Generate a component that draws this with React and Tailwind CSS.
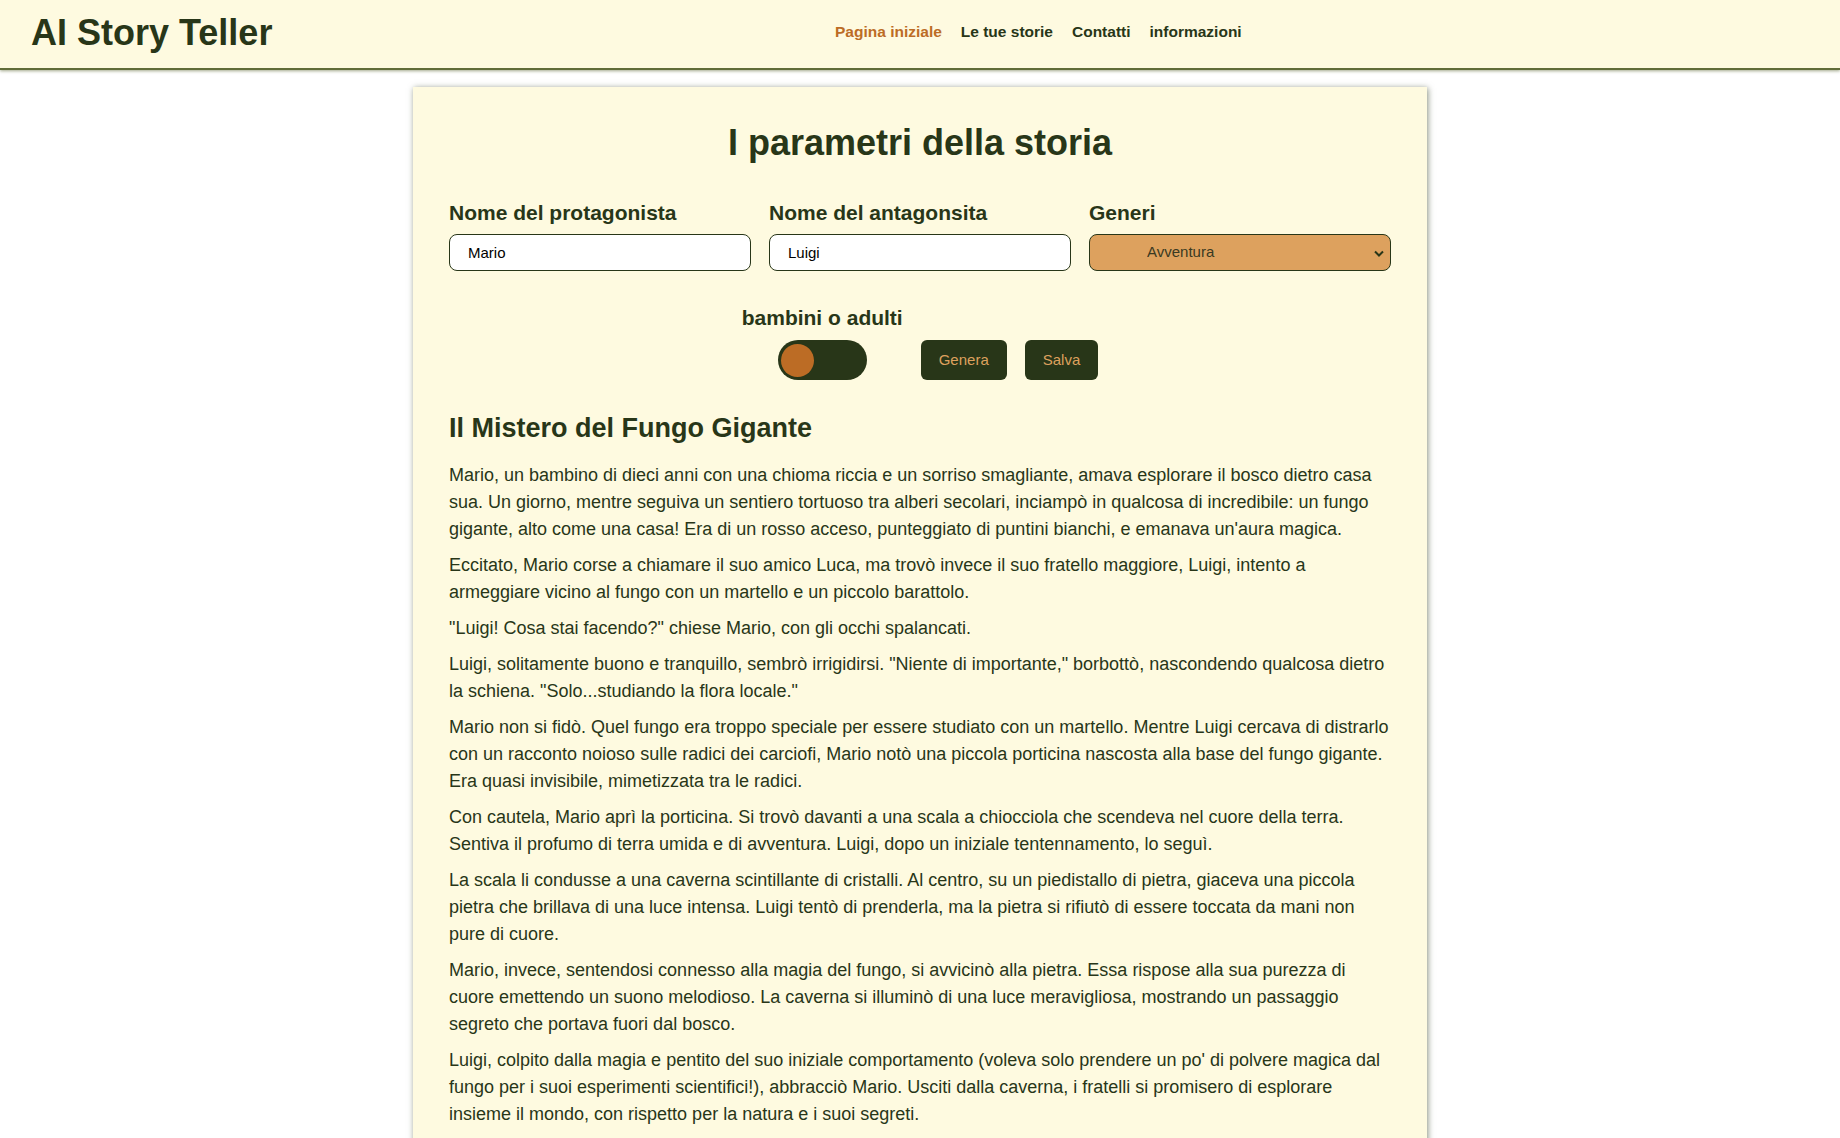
import React, { useState } from "react";

const NAV_LINKS = [
  { label: "Pagina iniziale", active: true },
  { label: "Le tue storie" },
  { label: "Contatti" },
  { label: "informazioni" },
];

const GENRES = ["Avventura", "Fantasy", "Giallo", "Fantascienza", "Horror"];

const STORY = {
  title: "Il Mistero del Fungo Gigante",
  paragraphs: [
    "Mario, un bambino di dieci anni con una chioma riccia e un sorriso smagliante, amava esplorare il bosco dietro casa sua. Un giorno, mentre seguiva un sentiero tortuoso tra alberi secolari, inciampò in qualcosa di incredibile: un fungo gigante, alto come una casa! Era di un rosso acceso, punteggiato di puntini bianchi, e emanava un'aura magica.",
    "Eccitato, Mario corse a chiamare il suo amico Luca, ma trovò invece il suo fratello maggiore, Luigi, intento a armeggiare vicino al fungo con un martello e un piccolo barattolo.",
    "\"Luigi! Cosa stai facendo?\" chiese Mario, con gli occhi spalancati.",
    "Luigi, solitamente buono e tranquillo, sembrò irrigidirsi. \"Niente di importante,\" borbottò, nascondendo qualcosa dietro la schiena. \"Solo...studiando la flora locale.\"",
    "Mario non si fidò. Quel fungo era troppo speciale per essere studiato con un martello. Mentre Luigi cercava di distrarlo con un racconto noioso sulle radici dei carciofi, Mario notò una piccola porticina nascosta alla base del fungo gigante. Era quasi invisibile, mimetizzata tra le radici.",
    "Con cautela, Mario aprì la porticina. Si trovò davanti a una scala a chiocciola che scendeva nel cuore della terra. Sentiva il profumo di terra umida e di avventura. Luigi, dopo un iniziale tentennamento, lo seguì.",
    "La scala li condusse a una caverna scintillante di cristalli. Al centro, su un piedistallo di pietra, giaceva una piccola pietra che brillava di una luce intensa. Luigi tentò di prenderla, ma la pietra si rifiutò di essere toccata da mani non pure di cuore.",
    "Mario, invece, sentendosi connesso alla magia del fungo, si avvicinò alla pietra. Essa rispose alla sua purezza di cuore emettendo un suono melodioso. La caverna si illuminò di una luce meravigliosa, mostrando un passaggio segreto che portava fuori dal bosco.",
    "Luigi, colpito dalla magia e pentito del suo iniziale comportamento (voleva solo prendere un po' di polvere magica dal fungo per i suoi esperimenti scientifici!), abbracciò Mario. Usciti dalla caverna, i fratelli si promisero di esplorare insieme il mondo, con rispetto per la natura e i suoi segreti.",
  ],
};

function Navbar() {
  return (
    <header className="flex h-[70px] items-center border-b-2 border-[#606c38] bg-[#fefae0] pb-[4px] pl-[31px] shadow-[0_1px_3px_rgba(96,108,56,0.6)]">
      {/* Logo */}
      <div className="w-[804px] shrink-0 text-[36px] font-bold leading-[41px] text-[#283618]">
        AI Story Teller
      </div>

      {/* Links */}
      <nav className="flex items-center gap-[19px] text-[15.5px] font-bold leading-[18px]">
        {NAV_LINKS.map(({ label, active }) => (
          <a
            key={label}
            href="#"
            onClick={(e) => e.preventDefault()}
            className={active ? "text-[#bc6c25]" : "text-[#283618] hover:text-[#bc6c25]"}
          >
            {label}
          </a>
        ))}
      </nav>
    </header>
  );
}

function Field({ label, children }) {
  return (
    <div className="flex flex-col">
      <label className="mb-[9px] text-[21px] font-bold leading-[24px] text-[#283618]">{label}</label>
      {children}
    </div>
  );
}

function Toggle({ on, setOn }) {
  return (
    <button
      role="switch"
      aria-checked={on}
      onClick={() => setOn((v) => !v)}
      className={`flex h-[40px] w-[89px] items-center rounded-full bg-[#283618] px-[3px] ${on ? "justify-end" : "justify-start"}`}
    >
      <span className="h-[33px] w-[33px] rounded-full bg-[#bc6c25]" />
    </button>
  );
}

export default function App() {
  const [hero, setHero] = useState("Mario");
  const [villain, setVillain] = useState("Luigi");
  const [genre, setGenre] = useState("Avventura");
  const [adult, setAdult] = useState(false);

  const inputCls =
    "h-[37px] w-full rounded-[8px] border border-[#283618] bg-white px-[18px] text-[15px] text-black outline-none";

  return (
    <div className="min-h-screen bg-white font-['Liberation_Sans',Arial,sans-serif] text-[#283618]">
      <Navbar />

      <main className="mx-auto mt-[17px] w-[1014px] bg-[#fefae0] px-[36px] pb-[40px] pt-[35px] shadow-[1px_1px_6px_rgba(40,54,24,0.55)]">
        <h1 className="text-center text-[36px] font-bold leading-[42px]">I parametri della storia</h1>

        {/* Story parameters */}
        <div className="mt-[37px] grid grid-cols-3 gap-[18px]">
          <Field label="Nome del protagonista">
            <input className={inputCls} value={hero} onChange={(e) => setHero(e.target.value)} />
          </Field>
          <Field label="Nome del antagonsita">
            <input className={inputCls} value={villain} onChange={(e) => setVillain(e.target.value)} />
          </Field>
          <Field label="Generi">
            <div className="relative">
              <select
                value={genre}
                onChange={(e) => setGenre(e.target.value)}
                className="h-[37px] w-full appearance-none rounded-[8px] border border-[#283618] bg-[#dda15e] pl-[57px] text-[15px] text-[#3a3a22] outline-none"
              >
                {GENRES.map((g) => (
                  <option key={g}>{g}</option>
                ))}
              </select>
              <svg
                className="pointer-events-none absolute right-[7px] top-[16px]"
                width="10"
                height="7"
                viewBox="0 0 10 7"
                fill="none"
              >
                <path d="M1 1.5l4 4 4-4" stroke="#283618" strokeWidth="2" />
              </svg>
            </div>
          </Field>
        </div>

        {/* Audience + actions */}
        <div className="mt-[35px] flex items-end justify-center gap-[18px]">
          <div className="flex flex-col items-center">
            <span className="text-[21px] font-bold leading-[24px]">bambini o adulti</span>
            <div className="mt-[10px]">
              <Toggle on={adult} setOn={setAdult} />
            </div>
          </div>
          <button className="h-[40px] rounded-[6px] bg-[#283618] px-[18px] text-[15px] text-[#dda15e] hover:opacity-90">
            Genera
          </button>
          <button className="h-[40px] rounded-[6px] bg-[#283618] px-[18px] text-[15px] text-[#dda15e] hover:opacity-90">
            Salva
          </button>
        </div>

        {/* Generated story */}
        <article className="mt-[33px]">
          <h2 className="text-[27px] font-bold leading-[31px]">{STORY.title}</h2>
          <div className="mt-[18px] flex flex-col gap-[9px] text-[18px] leading-[27px]">
            {STORY.paragraphs.map((p, i) => (
              <p key={i}>{p}</p>
            ))}
          </div>
        </article>
      </main>
    </div>
  );
}
